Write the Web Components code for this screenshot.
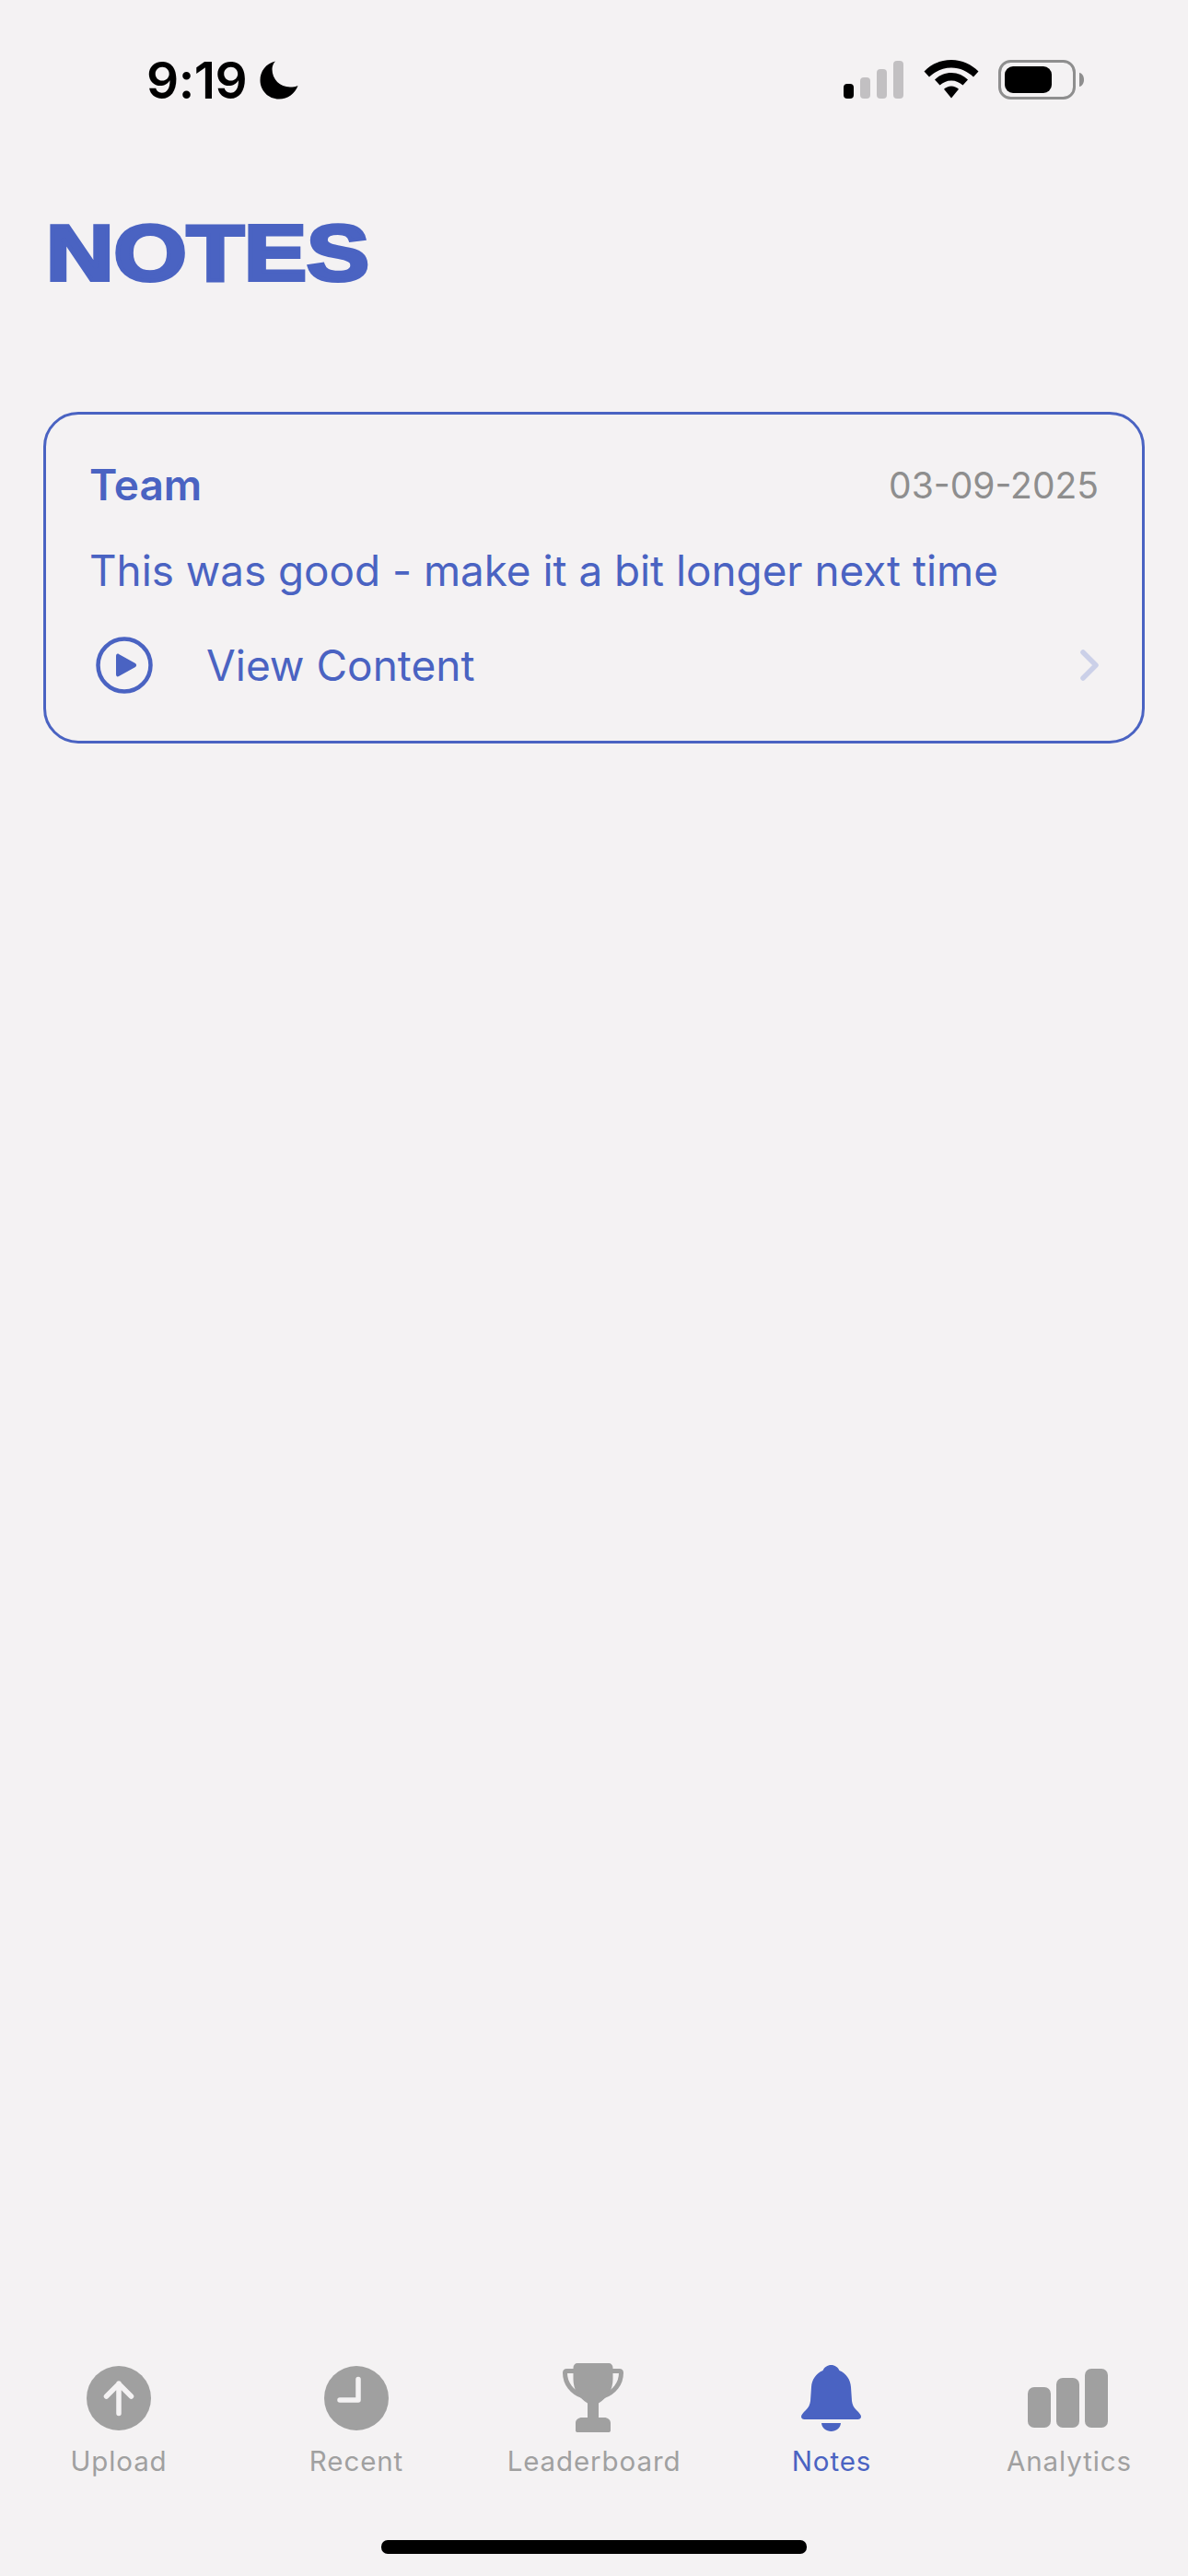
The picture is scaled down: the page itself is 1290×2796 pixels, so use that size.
<!DOCTYPE html>
<html>
<head>
<meta charset="utf-8">
<title>Notes</title>
<style>
	html, body { margin: 0; padding: 0; background: #f4f2f3; }
</style>
</head>
<body>
<notes-screen>
	<status-bar slot="status"></status-bar>
	<h-title slot="title">NOTES</h-title>
	<note-card slot="content" sender="Team" date="03-09-2025">This was good - make it a bit longer next time</note-card>
	<tab-bar slot="tabs"></tab-bar>
</notes-screen>

<script>
const BLUE = '#4a63c2';

class NotesScreen extends HTMLElement {
	constructor() {
		super();
		const shadowRoot = this.attachShadow({mode: 'open'});
		shadowRoot.innerHTML = `
			<style>
				:host {
					display: flex;
					flex-direction: column;
					width: 1290px;
					height: 2796px;
					background: #f4f2f3;
					font-family: Inter, "Liberation Sans", sans-serif;
				}
				main {
					flex: 1;
					padding: 0 47px 0 47px;
				}
			</style>
			<slot name="status"></slot>
			<slot name="title"></slot>
			<main><slot name="content"></slot></main>
			<slot name="tabs"></slot>
		`;
	}
}

class StatusBar extends HTMLElement {
	constructor() {
		super();
		const shadowRoot = this.attachShadow({mode: 'open'});
		shadowRoot.innerHTML = `
			<style>
				:host {
					display: flex;
					justify-content: space-between;
					align-items: flex-start;
					height: 120px;
					padding: 50px 113px 0 159px;
					box-sizing: border-box;
				}
				.left { display: flex; align-items: center; gap: 14px; }
				.time { font-size: 55px; line-height: 74px; font-weight: 600; color: #000; letter-spacing: -0.5px; }
				.right { display: flex; align-items: flex-start; margin-top: 15px; }
				svg { display: block; }
			</style>
			<div class="left">
				<span class="time">9:19</span>
				<svg width="42" height="42" viewBox="0 0 42 42"><path d="M17 0.500C6.500 3 0.500 11.500 0.500 21C0.500 32.500 9.500 41.500 21 41.500C30.500 41.500 38.500 35.500 41.500 27C39 28 36 28.500 33 28.500C22 28.500 13.500 20 13.500 9C13.500 6 14.800 2.500 17 0.500Z" fill="#000"/></svg>
			</div>
			<div class="right">
				<svg width="261" height="44" viewBox="0 0 261 44">
					<rect x="0" y="26" width="11" height="16" rx="4" fill="#000"/>
					<rect x="18" y="19" width="11" height="23" rx="4" fill="#c2c0c2"/>
					<rect x="36" y="10" width="11" height="32" rx="4" fill="#c2c0c2"/>
					<rect x="54" y="1" width="11" height="41" rx="4" fill="#c2c0c2"/>
					<path d="M117 0C129 0 139 5 146.500 12.500L141 18.500C134.500 12.500 126.500 8.500 117 8.500C107.500 8.500 99.500 12.500 93 18.500L87.500 12.500C95 5 105 0 117 0Z" fill="#000"/>
					<path d="M117 14C124 14 130.500 17 135 21.500L129.500 27.500C126 24.500 122 22.500 117 22.500C112 22.500 108 24.500 104.500 27.500L99 21.500C103.500 17 110 14 117 14Z" fill="#000"/>
					<path d="M117 28.500C120 28.500 123 29.800 125 31.800L117 41.500L109 31.800C111 29.800 114 28.500 117 28.500Z" fill="#000"/>
					<rect x="169.500" y="1.500" width="81" height="40" rx="12" fill="none" stroke="#8e8e8e" stroke-width="3"/>
					<rect x="175" y="7" width="51" height="29" rx="9" fill="#000"/>
					<path d="M256 14C259 14.500 261 17.500 261 21.500C261 25.500 259 28.500 256 29Z" fill="#8e8e8e"/>
				</svg>
			</div>
		`;
	}
}

class HTitle extends HTMLElement {
	constructor() {
		super();
		const shadowRoot = this.attachShadow({mode: 'open'});
		shadowRoot.innerHTML = `
			<style>
				:host {
					display: block;
					height: 327px;
					box-sizing: border-box;
					padding: 101px 0 0 50px;
					font-family: "Liberation Sans", Arial, sans-serif;
					font-size: 86px;
					line-height: 106px;
					font-weight: 700;
					color: ${BLUE};
					-webkit-text-stroke: 4px ${BLUE};
				}
				/* no heavy wide face installed, so stretch the bold */
				span {
					display: inline-block;
					transform: scaleX(1.185);
					transform-origin: left center;
				}
			</style>
			<span><slot></slot></span>
		`;
	}
}

class NoteCard extends HTMLElement {
	constructor() {
		super();
		const shadowRoot = this.attachShadow({mode: 'open'});
		shadowRoot.innerHTML = `
			<style>
				:host {
					display: flex;
					flex-direction: column;
					height: 360px;
					box-sizing: border-box;
					padding: 48px 47px 0 47px;
					border: 3px solid ${BLUE};
					border-radius: 38px;
					color: ${BLUE};
				}
				.head {
					display: flex;
					justify-content: space-between;
					align-items: center;
					height: 56px;
				}
				.sender { font-size: 46px; font-weight: 600; }
				.date { font-size: 39px; color: #8e8e8e; }
				.body { font-size: 45.800px; line-height: 56px; margin-top: 38px; }
				.link {
					display: flex;
					align-items: center;
					height: 70px;
					margin-top: 39px;
					font-size: 46px;
				}
				.link .play { margin-left: 7px; }
				.link span { flex: 1; margin-left: 58px; }
				svg { display: block; }
			</style>
			<div class="head">
				<span class="sender"></span>
				<span class="date"></span>
			</div>
			<div class="body"><slot></slot></div>
			<div class="link">
				<svg class="play" width="62" height="62" viewBox="0 0 62 62">
					<circle cx="31" cy="31" r="28.500" fill="none" stroke="${BLUE}" stroke-width="4.500"/>
					<path d="M22 21V41C22 43 23.500 44 25 43L43 33C44.500 32 44.500 30 43 29L25 19C23.500 18 22 19 22 21Z" fill="${BLUE}"/>
				</svg>
				<span>View Content</span>
				<svg width="20" height="34" viewBox="0 0 20 34">
					<path d="M3 3L17 17L3 31" fill="none" stroke="#cbd0e8" stroke-width="5.500" stroke-linecap="round" stroke-linejoin="round"/>
				</svg>
			</div>
		`;
	}

	connectedCallback() {
		this.shadowRoot.querySelector('.sender').textContent = this.getAttribute('sender');
		this.shadowRoot.querySelector('.date').textContent = this.getAttribute('date');
	}
}

const TAB_ICONS = {
	upload: `<circle cx="45" cy="45" r="35" fill="currentColor"/>
		<path d="M45 61.500V29M31.500 43L45 29.500L58.500 43" fill="none" stroke="#f4f2f3" stroke-width="5.500" stroke-linecap="round" stroke-linejoin="round"/>`,
	clock: `<circle cx="45" cy="45" r="35" fill="currentColor"/>
		<path d="M47 24.500V47H27" fill="none" stroke="#f4f2f3" stroke-width="5.500" stroke-linecap="round" stroke-linejoin="round"/>`,
	trophy: `<path d="M27 7H61C63.500 7 65.500 9 65.500 12V24C65.500 36 60 44 50 50.500V66H56C60 66 63 68.500 63 72V80C63 81.500 62 82 60.500 82H27.500C26 82 25 81.500 25 80V72C25 68.500 28 66 32 66H38V50.500C28 44 22.500 36 22.500 24V12C22.500 9 24.500 7 27 7Z" fill="currentColor"/>
		<path d="M23 15.500H15.500C14 15.500 13.500 16 13.500 17.500C13.500 29 21 39 33 43M65 15.500H72.500C74 15.500 74.500 16 74.500 17.500C74.500 29 67 39 55 43" fill="none" stroke="currentColor" stroke-width="5"/>`,
	bell: `<path d="M44.500 9C48.500 9 52 11.500 53.500 15C61 18 65.500 25 66 33L67 48C67.500 52 69 55 72 58C75 61 77 63 77 65C77 67 75.500 68 73.500 68H15.500C13.500 68 12 67 12 65C12 63 14 61 17 58C20 55 21.500 52 22 48L23 33C23.500 25 28 18 35.500 15C37 11.500 40.500 9 44.500 9Z" fill="currentColor"/>
		<path d="M34 72H55C54.500 77.500 50 81 44.500 81C39 81 34.500 77.500 34 72Z" fill="currentColor"/>`,
	bars: `<rect x="0" y="33" width="25" height="44" rx="7" fill="currentColor"/>
		<rect x="31" y="23" width="25" height="54" rx="7" fill="currentColor"/>
		<rect x="62" y="13" width="25" height="64" rx="7" fill="currentColor"/>`
};

class TabItem extends HTMLElement {
	constructor() {
		super();
		const shadowRoot = this.attachShadow({mode: 'open'});
		shadowRoot.innerHTML = `
			<style>
				:host {
					display: flex;
					flex-direction: column;
					align-items: center;
					color: #a0a0a0;
				}
				:host([active]) { color: ${BLUE}; }
				svg { display: block; width: 90px; height: 90px; }
				.label {
					font-size: 29.500px;
					line-height: 36px;
					letter-spacing: 0.9px;
					margin-top: 5px;
				}
			</style>
			<svg viewBox="0 0 90 90"></svg>
			<span class="label"><slot></slot></span>
		`;
	}

	connectedCallback() {
		this.shadowRoot.querySelector('svg').innerHTML = TAB_ICONS[this.getAttribute('icon')];
	}
}

class TabBar extends HTMLElement {
	constructor() {
		super();
		const shadowRoot = this.attachShadow({mode: 'open'});
		shadowRoot.innerHTML = `
			<style>
				:host {
					display: flex;
					flex-direction: column;
					height: 238px;
				}
				.tabs {
					display: grid;
					grid-template-columns: repeat(5, 1fr);
				}
				.home {
					width: 462px;
					height: 15px;
					border-radius: 7px;
					background: #000;
					margin: 68px auto 0;
				}
			</style>
			<div class="tabs">
				<tab-item icon="upload">Upload</tab-item>
				<tab-item icon="clock">Recent</tab-item>
				<tab-item icon="trophy">Leaderboard</tab-item>
				<tab-item icon="bell" active>Notes</tab-item>
				<tab-item icon="bars">Analytics</tab-item>
			</div>
			<div class="home"></div>
		`;
	}
}

window.customElements.define('tab-item', TabItem);
window.customElements.define('tab-bar', TabBar);
window.customElements.define('note-card', NoteCard);
window.customElements.define('h-title', HTitle);
window.customElements.define('status-bar', StatusBar);
window.customElements.define('notes-screen', NotesScreen);
</script>
</body>
</html>
